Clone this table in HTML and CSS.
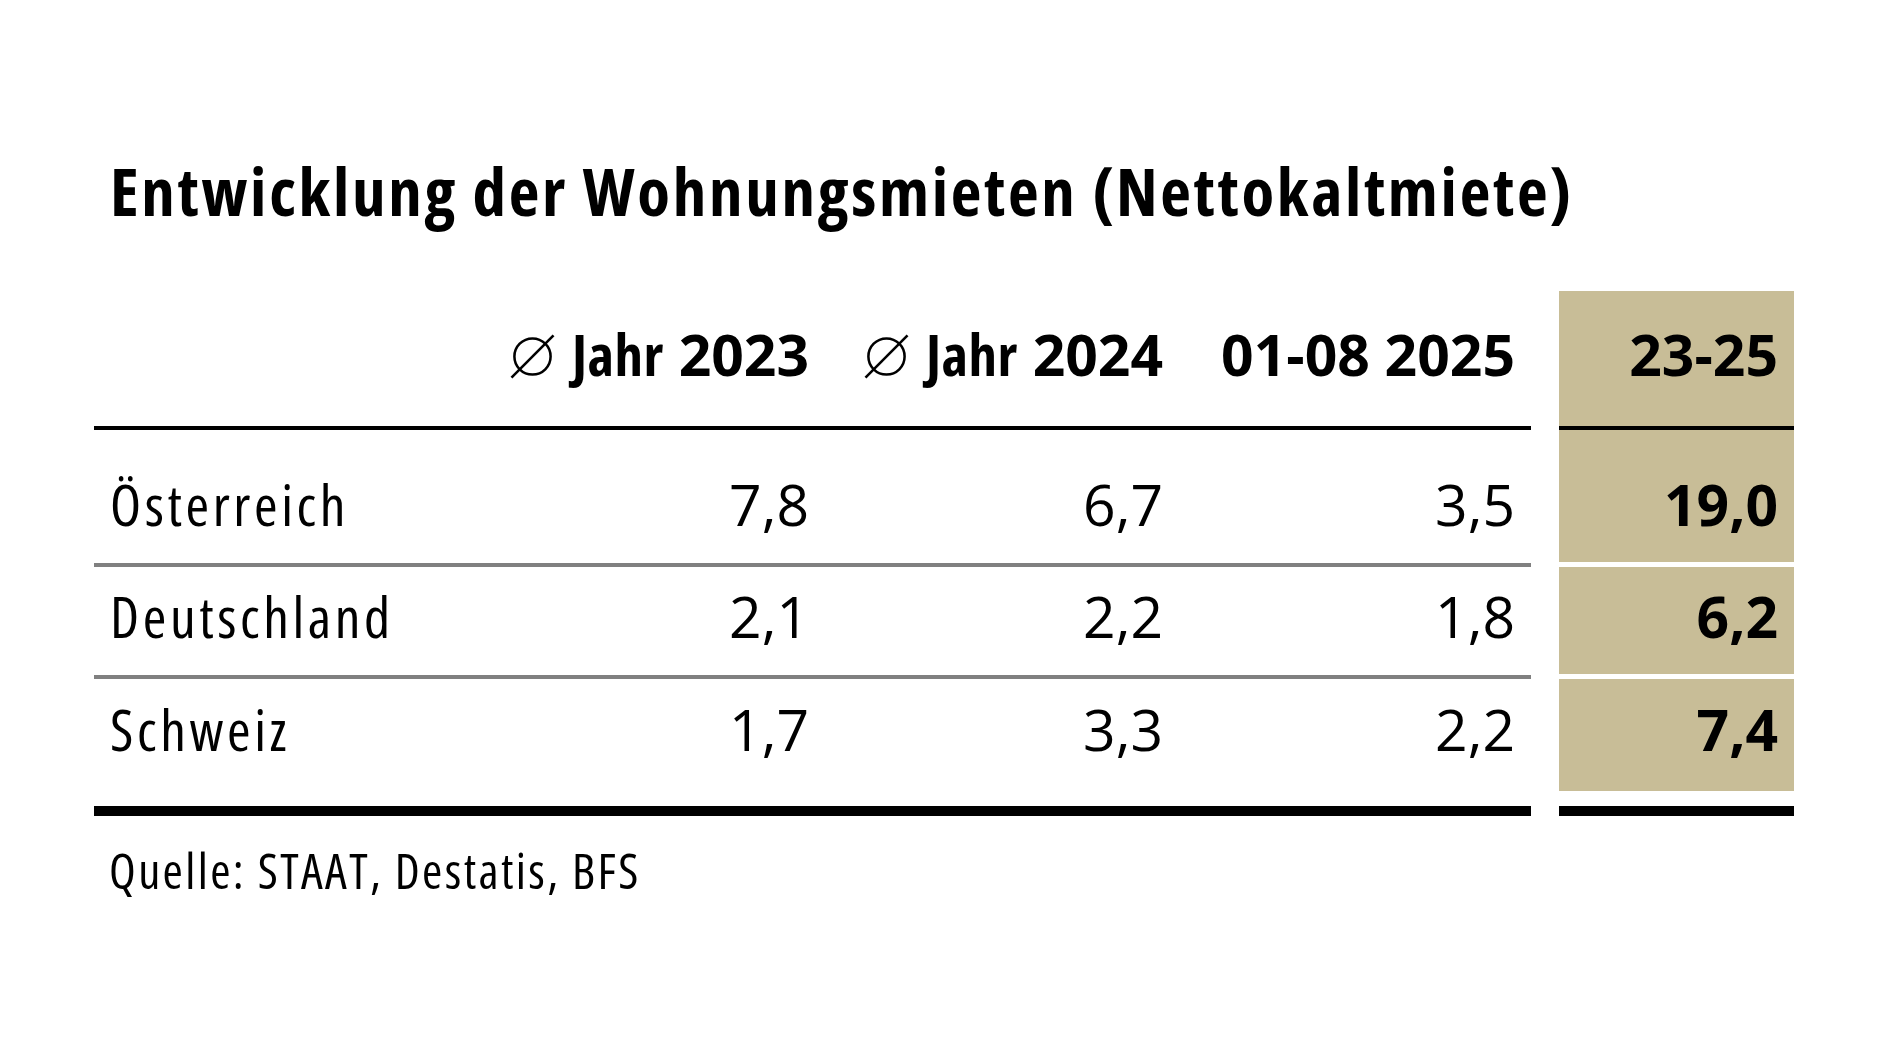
FILE: index.html
```html
<!DOCTYPE html>
<html lang="de">
<head>
<meta charset="utf-8">
<title>Entwicklung der Wohnungsmieten</title>
<link rel="stylesheet" href="styles.css">
</head>
<body>
<main class="chart">
  <h1 class="title">Entwicklung der Wohnungsmieten (Nettokaltmiete)</h1>
  <div class="table">
    <div class="cell head label"></div>
    <div class="cell head num"><svg class="dia" viewBox="0 0 46 46"><circle cx="23" cy="23" r="18.5"/><line x1="1.5" y1="44.5" x2="44.5" y2="1.5"/></svg><span class="word">Jahr</span> 2023</div>
    <div class="cell head num"><svg class="dia" viewBox="0 0 46 46"><circle cx="23" cy="23" r="18.5"/><line x1="1.5" y1="44.5" x2="44.5" y2="1.5"/></svg><span class="word">Jahr</span> 2024</div>
    <div class="cell head num">01-08 2025</div>
    <div class="cell head tan">23-25</div>

    <div class="cell r1 label">Österreich</div>
    <div class="cell r1 num">7,8</div>
    <div class="cell r1 num">6,7</div>
    <div class="cell r1 num">3,5</div>
    <div class="cell r1 tan">19,0</div>

    <div class="cell r2 label">Deutschland</div>
    <div class="cell r2 num">2,1</div>
    <div class="cell r2 num">2,2</div>
    <div class="cell r2 num">1,8</div>
    <div class="cell r2 tan">6,2</div>

    <div class="cell r3 label">Schweiz</div>
    <div class="cell r3 num">1,7</div>
    <div class="cell r3 num">3,3</div>
    <div class="cell r3 num">2,2</div>
    <div class="cell r3 tan">7,4</div>

    <div class="rule rule-main"></div>
    <div class="rule rule-tan"></div>
  </div>
  <p class="source">Quelle: STAAT, Destatis, BFS</p>
</main>
</body>
</html>
```

FILE: styles.css
```css
* { box-sizing: border-box; }
html, body { margin: 0; padding: 0; background: #fff; }
body {
  color: #000;
  font-family: "Open Sans", "Noto Sans", "DejaVu Sans", sans-serif;
}
.chart {
  width: 1890px;
  height: 1063px;
  padding: 150px 0 0 94px;
}
.title {
  margin: 0 0 0 16px;
  font-size: 67px;
  line-height: 80px;
  font-weight: 700;
  font-stretch: 75%;
  letter-spacing: 2.7px;
}
.table {
  margin-top: 61px;
  display: grid;
  grid-template-columns: 377px 354px 354px 352px 263px;
  width: 1700px;
}
.cell {
  font-size: 57px;
  line-height: 57px;
  white-space: nowrap;
}
.label {
  padding-left: 16px;
  font-stretch: 75%;
  letter-spacing: 3.6px;
}
.num {
  text-align: right;
  padding-right: 16px;
}
.tan {
  margin-left: 28px;
  background: #c8bd97;
  text-align: right;
  padding-right: 16px;
  font-weight: 700;
}
.head {
  height: 139px;
  padding-top: 35px;
  font-weight: 700;
  border-bottom: 4px solid #000;
}
.word {
  font-stretch: 75%;
  letter-spacing: 0.5px;
}
.dia {
  width: 45px;
  height: 45px;
  margin-right: 17px;
  vertical-align: -3px;
  fill: none;
  stroke: #000;
  stroke-width: 2.6;
}
.r1, .r2 { border-bottom: 4px solid #808080; }
.tan.r1, .tan.r2 { border-bottom: 5px solid #fff; }
.r1 { height: 137px; padding-top: 46px; }
.r2 { height: 112px; padding-top: 21px; }
.r3 { height: 112px; padding-top: 22px; }
.rule {
  height: 10px;
  margin-top: 15px;
  background: #000;
}
.rule-main { grid-column: 1 / 5; }
.rule-tan { grid-column: 5; margin-left: 28px; }
.source {
  margin: 30px 0 0 15px;
  font-size: 49px;
  line-height: 49px;
  font-stretch: 75%;
  letter-spacing: 2.4px;
}
```
